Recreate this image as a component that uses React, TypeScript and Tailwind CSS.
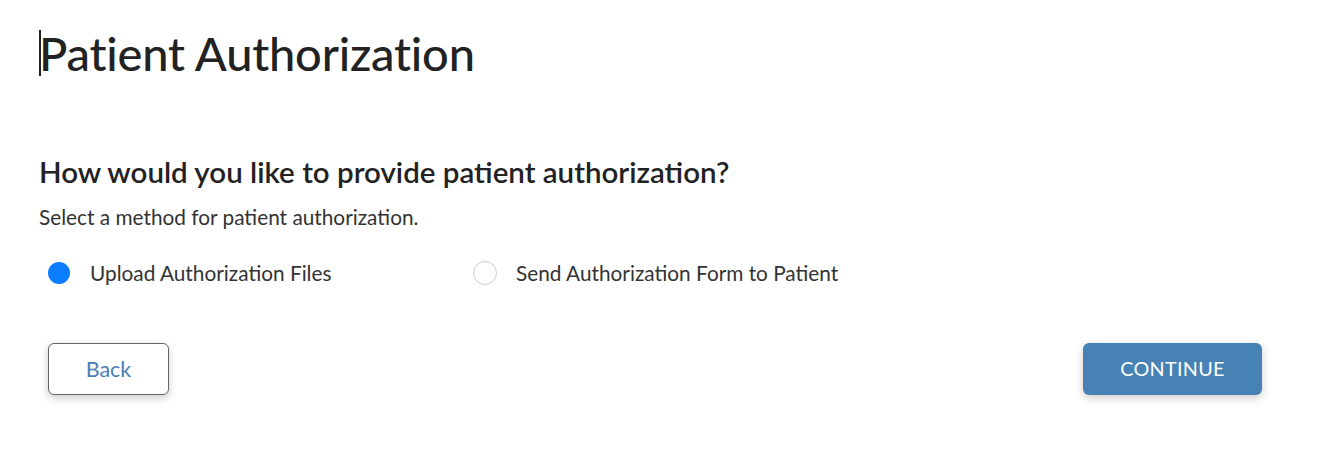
import React from 'react';

const App = () => {
  return (
    <div className="w-[1338px] h-[452px] bg-white text-[#222] font-['Lato','Liberation_Sans',sans-serif]">
      <div className="pl-[39px] pr-[76px] pt-[24px]">
        {/* Title with caret */}
        <div className="relative">
          <span className="absolute left-0 top-[6px] w-[2px] h-[46px] bg-[#222]" />
          <h1 className="text-[47px] leading-[58px] font-medium tracking-[-0.2px]">Patient Authorization</h1>
        </div>

        <h2 className="mt-[73px] text-[29.5px] leading-[34px] font-semibold">How would you like to provide patient authorization?</h2>
        <p className="mt-[16px] text-[20.8px] leading-[24px] text-[#333]">Select a method for patient authorization.</p>

        {/* Options */}
        <div className="mt-[32px] flex items-center text-[20.8px] leading-[24px] text-[#333]">
          <label className="flex items-center w-[425px]">
            <span className="ml-[9px] w-[22px] h-[22px] rounded-full bg-[#0a7cff]" />
            <span className="ml-[20px]">Upload Authorization Files</span>
          </label>
          <label className="flex items-center">
            <span className="ml-[9px] w-[24px] h-[24px] rounded-full border border-[#ccc] bg-white" />
            <span className="ml-[19px]">Send Authorization Form to Patient</span>
          </label>
        </div>

        {/* Actions */}
        <div className="mt-[58px] flex justify-between pl-[9px]">
          <button className="w-[121px] h-[52px] rounded-[6px] border border-[#666] bg-white text-[21.5px] text-[#4a80b8] shadow-[0_3px_8px_rgba(0,0,0,0.2)]">
            Back
          </button>
          <button className="w-[179px] h-[52px] rounded-[6px] bg-[#4682b4] text-[19.8px] text-white tracking-[0.3px] shadow-[0_3px_8px_rgba(0,0,0,0.2)]">
            CONTINUE
          </button>
        </div>
      </div>
    </div>
  );
};

export default App;
